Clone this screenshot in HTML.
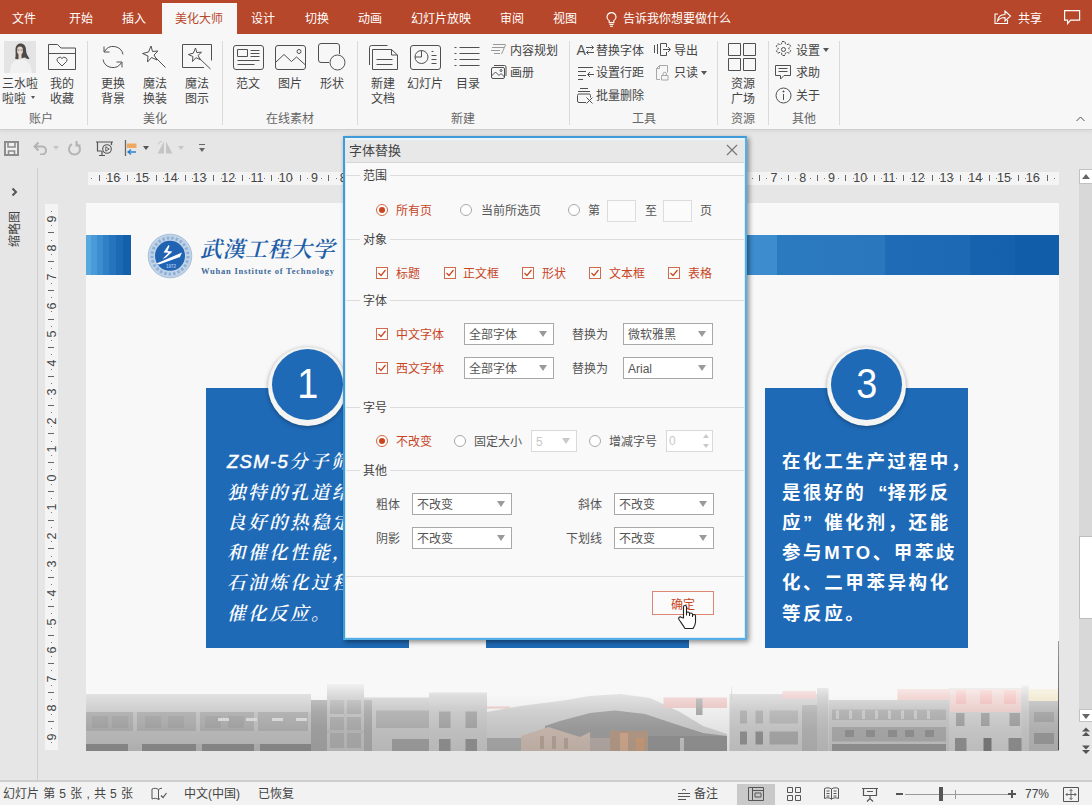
<!DOCTYPE html>
<html lang="zh-CN">
<head>
<meta charset="utf-8">
<title>字体替换</title>
<style>
*{box-sizing:border-box;margin:0;padding:0}
html,body{width:1092px;height:805px;overflow:hidden;background:#e6e6e6}
body{font-family:"Liberation Sans","Noto Sans CJK SC",sans-serif;font-size:12px;color:#444;position:relative}
.abs{position:absolute}
#tabbar{position:absolute;left:0;top:0;width:1092px;height:34px;background:#b7472a}
#tabbar .t{position:absolute;top:11px;font-size:12px;line-height:16px;color:#fff;white-space:nowrap}
#acttab{position:absolute;left:162px;top:3px;width:75px;height:32px;background:#f7f7f7}
#ribbon{position:absolute;left:0;top:34px;width:1092px;height:96px;background:#f7f7f7;border-bottom:1px solid #cfcfcf;box-shadow:0 2px 3px rgba(0,0,0,.05)}
.sep{position:absolute;top:41px;width:1px;height:84px;background:#dadada}
.lbl{position:absolute;font-size:12px;line-height:15px;color:#444;text-align:center;white-space:nowrap}
.glbl{position:absolute;top:112px;font-size:12px;line-height:15px;color:#666;text-align:center;white-space:nowrap}
.ico{position:absolute;overflow:visible}
.ico *{fill:none;stroke:#505050;stroke-width:1}
#status{position:absolute;left:0;top:780px;width:1092px;height:25px;background:#f2f2f2;border-top:2px solid #cecece}
#status .s{position:absolute;top:4px;font-size:12px;line-height:16px;color:#444;white-space:nowrap}
#leftpane{position:absolute;left:0;top:168px;width:38px;height:612px;border-right:1px solid #cfcfcf}
#slide{position:absolute;left:86px;top:203px;width:973px;height:548px;background:#f8f8f8;overflow:hidden}
/* dialog */
#dlg{position:absolute;left:343px;top:136px;width:404px;height:504px;background:#f9f9f9;border:2px solid #3f9cd8;border-right-color:#56aee6;border-bottom-color:#56aee6;box-shadow:2px 2px 5px rgba(0,0,0,.45)}
#dlg:before{content:"";position:absolute;left:0;top:0;right:0;bottom:0;border:1px solid #d6ecf8;border-top:2px solid #eaf4fa;z-index:3;pointer-events:none}
#dlg .ttl{position:absolute;left:0;top:0;width:400px;height:25px;background:#e8e8e8;border-bottom:1px solid #d6d6d6}
#dlg .d{margin-top:1px;position:absolute;font-size:12px;line-height:16px;white-space:nowrap;color:#555}
#dlg .o{color:#c8451f}
#dlg .hl{position:absolute;left:0;width:400px;height:1px;background:#dcdcdc}
#dlg .sec{margin-top:1px;position:absolute;left:15px;font-size:12px;line-height:16px;background:#f8f8f8;padding:0 3px;color:#444}
.rad{position:absolute;width:12px;height:12px;border-radius:50%;border:1px solid #a9a9a9;background:#fff}
.rad.on{border-color:#d2693f}
.rad.on:after{content:"";position:absolute;left:2px;top:2px;width:6px;height:6px;border-radius:50%;background:#c8451f}
.chk{position:absolute;width:12px;height:12px;border:1px solid #d06a4c;background:#fff}
.chk svg{position:absolute;left:0;top:0}
.sel{padding-top:1px;position:absolute;height:22px;border:1px solid #a8a8a8;background:#fff;font-size:12px;line-height:20px;color:#555;padding-left:4px;white-space:nowrap}
.sel:after{content:"";position:absolute;right:6px;top:7px;border-left:4px solid transparent;border-right:4px solid transparent;border-top:6.500px solid #9a9a9a}
.sel.dis{border-color:#d9d9d9;color:#c8c8c8}
.sel.dis:after{border-top-color:#c9c9c9}
.rn{position:absolute;top:170px;width:20px;text-align:center;font-size:12.500px;line-height:16px;color:#444}
.rt{position:absolute;top:175px;width:1px;height:6px;background:#666}
.rd{position:absolute;top:178px;width:1px;height:1px;background:#777}
.vn{position:absolute;left:43.500px;margin-top:1px;width:16px;height:12px;text-align:center;font-size:12.500px;line-height:12px;color:#444;transform:rotate(-90deg)}
.vt{position:absolute;left:48px;width:6px;height:1px;background:#666}
.vd{position:absolute;left:51px;width:1px;height:1px;background:#777}
.q{display:inline-block;width:21.100px;letter-spacing:0}
.dg{display:inline-block;transform:scaleX(.9)}
</style>
</head>
<body>
<div id="tabbar">
<div id="acttab"></div>
<span class="t" style="left:12px">文件</span>
<span class="t" style="left:69px">开始</span>
<span class="t" style="left:122px">插入</span>
<span class="t" style="left:175px;color:#b7472a">美化大师</span>
<span class="t" style="left:251px">设计</span>
<span class="t" style="left:305px">切换</span>
<span class="t" style="left:358px">动画</span>
<span class="t" style="left:411px">幻灯片放映</span>
<span class="t" style="left:500px">审阅</span>
<span class="t" style="left:553px">视图</span>
<svg class="abs" style="left:605px;top:12px" width="13" height="15" viewBox="0 0 13 15"><path d="M6.500 0.600a4.300 4.300 0 0 0-2.300 8v2h4.600v-2a4.300 4.300 0 0 0-2.300-8zM4.500 12.500h4M5 14.300h3" fill="none" stroke="#fff" stroke-width="1.100"/></svg>
<span class="t" style="left:623px">告诉我你想要做什么</span>
<svg class="abs" style="left:994px;top:10px" width="18" height="15" viewBox="0 0 18 15"><path d="M4 4h-3v9.500h12.500v-3.500M3.500 11c.500-4 3-6.500 7.500-6.500v-3.500l5.500 5-5.500 5v-3.500c-3.500 0-5.500 1-7.500 3.500z" fill="none" stroke="#fff" stroke-width="1.100"/></svg>
<span class="t" style="left:1018px">共享</span>
<svg class="abs" style="left:1064px;top:10px" width="17" height="15" viewBox="0 0 17 15"><path d="M0.600 0.600h15v9.500h-9l-3 3.500v-3.500h-3z" fill="none" stroke="#fff" stroke-width="1.200"/></svg>
</div>
<div id="ribbon"></div>
<!-- group: account -->
<svg class="abs" style="left:4px;top:41px" width="32" height="32" viewBox="0 0 32 32"><rect width="32" height="32" fill="#e4e4e4"/><path d="M6 32c0-8 3-12 8-13.500h5c5 1.500 8.500 5.500 9 13.500z" fill="#f1f1f1"/><path d="M11.500 9c0-4 2-6.500 5-6.500 3.500 0 5.500 2.500 5.500 6.500 0 3 1.500 6 3.500 8.500-1.500 1-3 .500-4.500-1l-5 1c-1.500 1-3.500 1-5 0 1-2 .500-5 .500-8.500z" fill="#4c4a49"/><ellipse cx="16" cy="9.500" rx="3" ry="4" fill="#e6d6cc"/><path d="M14.500 13h3v4.500l-1.500 1.500-1.500-1.500z" fill="#e6d6cc"/><path d="M13.200 9h2.200M16.600 9h2.200" stroke="#555" stroke-width=".7" fill="none"/></svg>
<div class="lbl" style="left:2px;top:77px;width:36px">三水啦</div>
<div class="lbl" style="left:2px;top:91.500px;width:24px">啦啦</div>
<div class="abs" style="left:31px;top:96px;border-left:2.500px solid transparent;border-right:2.500px solid transparent;border-top:3.500px solid #555"></div>
<svg class="ico" style="left:48px;top:43px" width="29" height="28" viewBox="0 0 29 28"><path d="M0.500 26.500v-25h9l3.500 3.500h14.500v21.500zM0.500 10.500h27"/><path d="M14 23l-4.500-4.500a2.700 2.700 0 0 1 4.500-3 2.700 2.700 0 0 1 4.500 3z"/></svg>
<div class="lbl" style="left:50px;top:77px;width:24px">我的</div>
<div class="lbl" style="left:50px;top:91.500px;width:24px">收藏</div>
<div class="glbl" style="left:29px;width:24px">账户</div>
<div class="sep" style="left:87px"></div>
<!-- group: beautify -->
<svg class="ico" style="left:100px;top:45px;transform:scaleX(-1)" width="26" height="24" viewBox="0 0 26 24"><path d="M3 9.500a10 10 0 0 1 18.500-3M23 14.500a10 10 0 0 1-18.500 3"/><path d="M22 1.500v5.500h-5.500M4 22.500v-5.500h5.500"/></svg>
<div class="lbl" style="left:101px;top:77px;width:24px">更换</div>
<div class="lbl" style="left:101px;top:91.500px;width:24px">背景</div>
<svg class="ico" style="left:142px;top:45px" width="25" height="24" viewBox="0 0 25 24"><path d="M9 1l1.500 5.500 5.500-.5-4 4 3 5-5.500-2.500-4 4.500.500-6-5.500-2.500 6-1.500z"/><path d="M13 12l10.500 10.500" stroke-width="1.600"/></svg>
<div class="lbl" style="left:143px;top:77px;width:24px">魔法</div>
<div class="lbl" style="left:143px;top:91.500px;width:24px">换装</div>
<svg class="ico" style="left:182px;top:44px" width="31" height="26" viewBox="0 0 31 26"><path d="M22 23.500h-21.500v-23h29v16"/><path d="M13.500 4l1.300 4.500 4.700-.300-3.500 3.300 2.500 4.200-4.600-2-3.400 3.800.400-5-4.600-2 5-1.300z"/><path d="M17 14l11.500 11" stroke-width="1.600"/></svg>
<div class="lbl" style="left:185px;top:77px;width:24px">魔法</div>
<div class="lbl" style="left:185px;top:91.500px;width:24px">图示</div>
<div class="glbl" style="left:143px;width:24px">美化</div>
<div class="sep" style="left:222px"></div>
<!-- group: online material -->
<svg class="ico" style="left:233px;top:45px" width="31" height="25" viewBox="0 0 31 25"><rect x="0.500" y="0.500" width="30" height="24" rx="2.500"/><path d="M4.500 4.500h10v7h-10zM17.500 5.500h9M17.500 8.500h9M17.500 11.500h9M4.500 15.500h22M4.500 19.500h17"/></svg>
<div class="lbl" style="left:236px;top:77px;width:24px">范文</div>
<svg class="ico" style="left:275px;top:45px" width="31" height="25" viewBox="0 0 31 25"><rect x="0.500" y="0.500" width="30" height="24" rx="2.500"/><path d="M0.500 17.500l8.500-8 7.500 7 5-4.500 9 8"/><circle cx="24" cy="6.500" r="2"/></svg>
<div class="lbl" style="left:278px;top:77px;width:24px">图片</div>
<svg class="ico" style="left:318px;top:43px" width="28" height="28" viewBox="0 0 28 28"><path d="M11 19.500h-8a2.500 2.500 0 0 1-2.500-2.500v-14a2.500 2.500 0 0 1 2.500-2.500h16a2.500 2.500 0 0 1 2.500 2.500v8"/><circle cx="19.500" cy="19.500" r="7.500"/></svg>
<div class="lbl" style="left:320px;top:77px;width:24px">形状</div>
<div class="glbl" style="left:266px;width:48px">在线素材</div>
<div class="sep" style="left:357px"></div>
<!-- group: new -->
<svg class="ico" style="left:368px;top:44px" width="31" height="26" viewBox="0 0 31 26"><path d="M4.500 25.500v-20h19l6 5.500v14.500zM23.500 5.500v5.500h6M8.500 15.500h16M8.500 20.500h16"/><path d="M1.500 21v-17.500a2 2 0 0 1 2-2h16"/></svg>
<div class="lbl" style="left:371px;top:77px;width:24px">新建</div>
<div class="lbl" style="left:371px;top:91.500px;width:24px">文档</div>
<svg class="ico" style="left:410px;top:45px" width="31" height="25" viewBox="0 0 31 25"><rect x="0.500" y="0.500" width="30" height="24" rx="2.500"/><circle cx="11.500" cy="12" r="6.500"/><path d="M11.500 5.500v6.500h-6.500M21.500 6.500h2M21.500 10.500h5M21.500 14.500h5M21.500 18.500h5"/></svg>
<div class="lbl" style="left:407px;top:77px;width:36px">幻灯片</div>
<svg class="ico" style="left:454px;top:46px" width="26" height="22" viewBox="0 0 26 22"><path d="M5.500 1.500h20M5.500 7.500h20M5.500 13.500h20M5.500 19.500h20"/><path d="M0.500 1.500h2M0.500 7.500h2M0.500 13.500h2M0.500 19.500h2" stroke-width="2"/></svg>
<div class="lbl" style="left:456px;top:77px;width:24px">目录</div>
<svg class="ico" style="left:491px;top:43px" width="15" height="13" viewBox="0 0 15 13"><path d="M2 1.500h12.500M1 4.500h12M0 7.500h9M3 10.500h6M14.500 2l-4 9" style="stroke:#999"/></svg>
<div class="lbl" style="left:510px;top:43.500px">内容规划</div>
<svg class="ico" style="left:491px;top:65px" width="16" height="14" viewBox="0 0 16 14"><rect x="0.500" y="2.500" width="13" height="11" rx="1.500"/><path d="M0.500 11l4-4 3.500 3.500 2-2 3.500 3.500M3 0.500h10.500a1.500 1.500 0 0 1 1.500 1.500v9"/><circle cx="10" cy="5.500" r="1"/></svg>
<div class="lbl" style="left:510px;top:66px">画册</div>
<div class="glbl" style="left:451px;width:24px">新建</div>
<div class="sep" style="left:569px"></div>
<!-- group: tools -->
<div class="lbl" style="left:576.500px;top:41.500px;font-size:14px;line-height:16px;color:#505050">A</div>
<svg class="ico" style="left:586px;top:45px" width="8" height="10" viewBox="0 0 8 10"><path d="M0 2.500h7.500M5.500 0.500l2 2-2 2M8 7.500h-7.500M2.500 5.500l-2 2 2 2"/></svg>
<div class="lbl" style="left:596px;top:43.500px">替换字体</div>
<svg class="ico" style="left:654px;top:43px" width="17" height="14" viewBox="0 0 17 14"><path d="M0.500 2v8M3.500 1v10M12.500 4v-3.500h-6v12h6v-3.500M9 6.500h7M14 4l2.500 2.500-2.500 2.500"/></svg>
<div class="lbl" style="left:674px;top:43.500px">导出</div>
<svg class="ico" style="left:578px;top:66px" width="16" height="14" viewBox="0 0 16 14"><path d="M0 1.500h15M0 5.500h8M0 9.500h8M0 13.500h5M16 8.500h-6M12 6l-2.500 2.500 2.500 2.500"/></svg>
<div class="lbl" style="left:596px;top:66px">设置行距</div>
<svg class="ico" style="left:656px;top:65px" width="13" height="16" viewBox="0 0 13 16"><path d="M4 14.500h-3.500v-11l3-3h8v7M0.500 3.500h3v-3" style="stroke:#a8a8a8"/><path d="M5.500 10.500h6.500v4.500h-6.500zM7 10.500v-1.500a1.700 1.700 0 0 1 3.400 0v1.500" style="stroke:#a8a8a8"/></svg>
<div class="lbl" style="left:674px;top:66px">只读</div>
<div class="abs" style="left:701px;top:71px;border-left:3px solid transparent;border-right:3px solid transparent;border-top:4px solid #555"></div>
<svg class="ico" style="left:577px;top:88px" width="17" height="16" viewBox="0 0 17 16"><path d="M3 0.500h8M1 3.500h12M9 14.500h-7a1.500 1.500 0 0 1-1.500-1.500v-5.500a1.500 1.500 0 0 1 1.500-1.500h10a1.500 1.500 0 0 1 1.500 1.500v2M9.500 9.500l6 6M15.500 9.500l-6 6"/></svg>
<div class="lbl" style="left:596px;top:89px">批量删除</div>
<div class="glbl" style="left:632px;width:24px">工具</div>
<div class="sep" style="left:717px"></div>
<!-- group: resources -->
<svg class="ico" style="left:728px;top:43px" width="30" height="28" viewBox="0 0 30 28"><path d="M0.500 0.500h12v12h-12zM15.500 0.500h12v12h-12zM0.500 15.500h12v12h-12zM15.500 15.500h12v12h-12z"/></svg>
<div class="lbl" style="left:731px;top:77px;width:24px">资源</div>
<div class="lbl" style="left:731px;top:91.500px;width:24px">广场</div>
<div class="glbl" style="left:731px;width:24px">资源</div>
<div class="sep" style="left:768px"></div>
<!-- group: other -->
<svg class="ico" style="left:775px;top:41px" width="17" height="17" viewBox="0 0 17 17"><circle cx="8.500" cy="8.500" r="2"/><path d="M7 0.500h3l.400 2.300 1.600.900 2.200-.900 1.500 2.600-1.800 1.500v1.200l1.800 1.500-1.500 2.600-2.200-.900-1.600.900-.400 2.300h-3l-.400-2.300-1.600-.900-2.200.900-1.500-2.600 1.800-1.500v-1.200l-1.800-1.500 1.500-2.600 2.200.900 1.600-.900z" stroke-dasharray="2.500 1"/></svg>
<div class="lbl" style="left:796px;top:43.500px">设置</div>
<div class="abs" style="left:823px;top:48px;border-left:3px solid transparent;border-right:3px solid transparent;border-top:4px solid #555"></div>
<svg class="ico" style="left:775px;top:65px" width="17" height="15" viewBox="0 0 17 15"><path d="M0.500 0.500h15v10h-6.500l-3.500 3.500v-3.500h-5zM3.500 3.500h9M3.500 6.500h9"/></svg>
<div class="lbl" style="left:796px;top:66px">求助</div>
<svg class="ico" style="left:775px;top:87px" width="17" height="17" viewBox="0 0 17 17"><circle cx="8.500" cy="8.500" r="7.500"/><path d="M8.500 7v6" stroke-width="1.500"/><circle cx="8.500" cy="4.500" r=".6" style="fill:#505050"/></svg>
<div class="lbl" style="left:796px;top:89px">关于</div>
<div class="glbl" style="left:792px;width:24px">其他</div>
<div class="sep" style="left:839px"></div>
<svg class="ico" style="left:1076px;top:116px" width="9" height="6" viewBox="0 0 9 6"><path d="M0.500 5l4-4 4 4" stroke-width="1.400"/></svg>
<svg class="abs" style="left:4px;top:141px" width="15" height="15" viewBox="0 0 15 15"><path d="M1 1h13v13h-13z" fill="#f0f0f0" stroke="#8c8c8c" stroke-width="2"/><path d="M4 1.500v4.500h7v-4.500M4.500 14v-4h6v4" fill="none" stroke="#8c8c8c" stroke-width="1.600"/></svg>
<svg class="abs" style="left:33px;top:141px" width="15" height="14" viewBox="0 0 15 14"><path d="M1.500 5.500h7.500a4 4 0 0 1 0 8h-2M5.500 1.500l-4 4 4 4" fill="none" stroke="#b4b4b4" stroke-width="2"/></svg>
<div class="abs" style="left:53px;top:146px;border-left:3px solid transparent;border-right:3px solid transparent;border-top:4px solid #c6c6c6"></div>
<svg class="abs" style="left:67px;top:141px" width="15" height="15" viewBox="0 0 15 15"><path d="M10 3.200a5.500 5.500 0 1 1-5 0M9.500 0v4.500h4" fill="none" stroke="#b4b4b4" stroke-width="2"/></svg>
<svg class="abs" style="left:96px;top:141px" width="17" height="16" viewBox="0 0 17 16"><path d="M0 1h17M1.500 1v9h4M15.500 1v3M3 14.500h6M6 10v4.500" fill="none" stroke="#555" stroke-width="1.200"/><circle cx="11" cy="8" r="4.300" fill="#e6e6e6" stroke="#555" stroke-width="1.100"/><path d="M9.800 5.800v4.400l3.400-2.200z" fill="none" stroke="#555" stroke-width=".9"/></svg>
<svg class="abs" style="left:124px;top:140px" width="13" height="16" viewBox="0 0 13 16"><path d="M1.500 0v16" stroke="#666" stroke-width="1.300"/><rect x="3" y="3.500" width="9.500" height="4.500" fill="#f0a860"/><path d="M4 12h8M7 9.500l-3 2.500 3 2.500" fill="none" stroke="#2f7fd0" stroke-width="1.300"/></svg>
<div class="abs" style="left:143px;top:146px;border-left:3px solid transparent;border-right:3px solid transparent;border-top:4px solid #555"></div>
<svg class="abs" style="left:157px;top:141px" width="16" height="13" viewBox="0 0 16 13"><path d="M7 0.500v12h-6.500zM9 0.500l6.500 12h-6.500z" fill="#c4c4c4"/><path d="M1 3.500a4 4 0 0 1 4-3" fill="none" stroke="#c4c4c4"/></svg>
<div class="abs" style="left:178px;top:146px;border-left:3px solid transparent;border-right:3px solid transparent;border-top:4px solid #c6c6c6"></div>
<div class="abs" style="left:199px;top:144px;width:6px;height:1px;background:#666"></div><div class="abs" style="left:199px;top:148px;border-left:3px solid transparent;border-right:3px solid transparent;border-top:4px solid #666"></div>
<div id="leftpane"></div>
<svg class="abs" style="left:11px;top:187px" width="7" height="10" viewBox="0 0 7 10"><path d="M1.500 1.500l3.500 3.500-3.500 3.500" fill="none" stroke="#555" stroke-width="2"/></svg>
<div class="abs" style="left:-4px;top:221px;width:38px;height:16px;line-height:16px;font-size:12px;color:#444;text-align:center;transform:rotate(-90deg);white-space:nowrap">缩略图</div>
<div class="abs" style="left:88px;top:172px;width:971px;height:13px;background:#f4f4f4"></div>
<span class="rn" style="left:103.3px">16</span>
<span class="rn" style="left:132.1px">15</span>
<span class="rn" style="left:160.8px">14</span>
<span class="rn" style="left:189.5px">13</span>
<span class="rn" style="left:218.2px">12</span>
<span class="rn" style="left:247.0px">11</span>
<span class="rn" style="left:275.7px">10</span>
<span class="rn" style="left:304.4px">9</span>
<span class="rn" style="left:333.2px">8</span>
<span class="rn" style="left:361.9px">7</span>
<span class="rn" style="left:390.6px">6</span>
<span class="rn" style="left:419.4px">5</span>
<span class="rn" style="left:448.1px">4</span>
<span class="rn" style="left:476.8px">3</span>
<span class="rn" style="left:505.5px">2</span>
<span class="rn" style="left:534.3px">1</span>
<span class="rn" style="left:563.0px">0</span>
<span class="rn" style="left:591.7px">1</span>
<span class="rn" style="left:620.5px">2</span>
<span class="rn" style="left:649.2px">3</span>
<span class="rn" style="left:677.9px">4</span>
<span class="rn" style="left:706.6px">5</span>
<span class="rn" style="left:764.1px">7</span>
<span class="rn" style="left:792.8px">8</span>
<span class="rn" style="left:821.6px">9</span>
<span class="rn" style="left:850.3px">10</span>
<span class="rn" style="left:879.0px">11</span>
<span class="rn" style="left:907.8px">12</span>
<span class="rn" style="left:936.5px">13</span>
<span class="rn" style="left:965.2px">14</span>
<span class="rn" style="left:994.0px">15</span>
<span class="rn" style="left:1022.7px">16</span>
<i class="rt" style="left:98.5px"></i>
<i class="rt" style="left:127.2px"></i>
<i class="rt" style="left:155.9px"></i>
<i class="rt" style="left:184.6px"></i>
<i class="rt" style="left:213.4px"></i>
<i class="rt" style="left:242.1px"></i>
<i class="rt" style="left:270.8px"></i>
<i class="rt" style="left:299.6px"></i>
<i class="rt" style="left:328.3px"></i>
<i class="rt" style="left:357.0px"></i>
<i class="rt" style="left:385.8px"></i>
<i class="rt" style="left:414.5px"></i>
<i class="rt" style="left:443.2px"></i>
<i class="rt" style="left:471.9px"></i>
<i class="rt" style="left:500.7px"></i>
<i class="rt" style="left:529.4px"></i>
<i class="rt" style="left:558.1px"></i>
<i class="rt" style="left:586.9px"></i>
<i class="rt" style="left:615.6px"></i>
<i class="rt" style="left:644.3px"></i>
<i class="rt" style="left:673.1px"></i>
<i class="rt" style="left:701.8px"></i>
<i class="rt" style="left:730.5px"></i>
<i class="rt" style="left:759.2px"></i>
<i class="rt" style="left:788.0px"></i>
<i class="rt" style="left:816.7px"></i>
<i class="rt" style="left:845.4px"></i>
<i class="rt" style="left:874.2px"></i>
<i class="rt" style="left:902.9px"></i>
<i class="rt" style="left:931.6px"></i>
<i class="rt" style="left:960.4px"></i>
<i class="rt" style="left:989.1px"></i>
<i class="rt" style="left:1017.8px"></i>
<i class="rt" style="left:1046.5px"></i>
<i class="rd" style="left:91.3px"></i>
<i class="rd" style="left:105.6px"></i>
<i class="rd" style="left:120.0px"></i>
<i class="rd" style="left:134.4px"></i>
<i class="rd" style="left:148.7px"></i>
<i class="rd" style="left:163.1px"></i>
<i class="rd" style="left:177.5px"></i>
<i class="rd" style="left:191.8px"></i>
<i class="rd" style="left:206.2px"></i>
<i class="rd" style="left:220.6px"></i>
<i class="rd" style="left:234.9px"></i>
<i class="rd" style="left:249.3px"></i>
<i class="rd" style="left:263.7px"></i>
<i class="rd" style="left:278.0px"></i>
<i class="rd" style="left:292.4px"></i>
<i class="rd" style="left:306.7px"></i>
<i class="rd" style="left:321.1px"></i>
<i class="rd" style="left:335.5px"></i>
<i class="rd" style="left:349.8px"></i>
<i class="rd" style="left:364.2px"></i>
<i class="rd" style="left:378.6px"></i>
<i class="rd" style="left:392.9px"></i>
<i class="rd" style="left:407.3px"></i>
<i class="rd" style="left:421.7px"></i>
<i class="rd" style="left:436.0px"></i>
<i class="rd" style="left:450.4px"></i>
<i class="rd" style="left:464.8px"></i>
<i class="rd" style="left:479.1px"></i>
<i class="rd" style="left:493.5px"></i>
<i class="rd" style="left:507.9px"></i>
<i class="rd" style="left:522.2px"></i>
<i class="rd" style="left:536.6px"></i>
<i class="rd" style="left:551.0px"></i>
<i class="rd" style="left:565.3px"></i>
<i class="rd" style="left:579.7px"></i>
<i class="rd" style="left:594.0px"></i>
<i class="rd" style="left:608.4px"></i>
<i class="rd" style="left:622.8px"></i>
<i class="rd" style="left:637.1px"></i>
<i class="rd" style="left:651.5px"></i>
<i class="rd" style="left:665.9px"></i>
<i class="rd" style="left:680.2px"></i>
<i class="rd" style="left:694.6px"></i>
<i class="rd" style="left:709.0px"></i>
<i class="rd" style="left:723.3px"></i>
<i class="rd" style="left:737.7px"></i>
<i class="rd" style="left:752.1px"></i>
<i class="rd" style="left:766.4px"></i>
<i class="rd" style="left:780.8px"></i>
<i class="rd" style="left:795.2px"></i>
<i class="rd" style="left:809.5px"></i>
<i class="rd" style="left:823.9px"></i>
<i class="rd" style="left:838.3px"></i>
<i class="rd" style="left:852.6px"></i>
<i class="rd" style="left:867.0px"></i>
<i class="rd" style="left:881.3px"></i>
<i class="rd" style="left:895.7px"></i>
<i class="rd" style="left:910.1px"></i>
<i class="rd" style="left:924.4px"></i>
<i class="rd" style="left:938.8px"></i>
<i class="rd" style="left:953.2px"></i>
<i class="rd" style="left:967.5px"></i>
<i class="rd" style="left:981.9px"></i>
<i class="rd" style="left:996.3px"></i>
<i class="rd" style="left:1010.6px"></i>
<i class="rd" style="left:1025.0px"></i>
<i class="rd" style="left:1039.4px"></i>
<i class="rd" style="left:1053.7px"></i>
<div class="abs" style="left:45px;top:204px;width:13px;height:546px;background:#f4f4f4"></div>
<span class="vn" style="top:212.4px">9</span>
<span class="vn" style="top:241.2px">8</span>
<span class="vn" style="top:269.9px">7</span>
<span class="vn" style="top:298.6px">6</span>
<span class="vn" style="top:327.4px">5</span>
<span class="vn" style="top:356.1px">4</span>
<span class="vn" style="top:384.8px">3</span>
<span class="vn" style="top:413.5px">2</span>
<span class="vn" style="top:442.3px">1</span>
<span class="vn" style="top:471.0px">0</span>
<span class="vn" style="top:499.7px">1</span>
<span class="vn" style="top:528.5px">2</span>
<span class="vn" style="top:557.2px">3</span>
<span class="vn" style="top:585.9px">4</span>
<span class="vn" style="top:614.6px">5</span>
<span class="vn" style="top:643.4px">6</span>
<span class="vn" style="top:672.1px">7</span>
<span class="vn" style="top:700.8px">8</span>
<span class="vn" style="top:729.6px">9</span>
<i class="vt" style="top:232.3px"></i>
<i class="vt" style="top:261.0px"></i>
<i class="vt" style="top:289.8px"></i>
<i class="vt" style="top:318.5px"></i>
<i class="vt" style="top:347.2px"></i>
<i class="vt" style="top:375.9px"></i>
<i class="vt" style="top:404.7px"></i>
<i class="vt" style="top:433.4px"></i>
<i class="vt" style="top:462.1px"></i>
<i class="vt" style="top:490.9px"></i>
<i class="vt" style="top:519.6px"></i>
<i class="vt" style="top:548.3px"></i>
<i class="vt" style="top:577.1px"></i>
<i class="vt" style="top:605.8px"></i>
<i class="vt" style="top:634.5px"></i>
<i class="vt" style="top:663.2px"></i>
<i class="vt" style="top:692.0px"></i>
<i class="vt" style="top:720.7px"></i>
<i class="vd" style="top:210.7px"></i>
<i class="vd" style="top:225.1px"></i>
<i class="vd" style="top:239.5px"></i>
<i class="vd" style="top:253.8px"></i>
<i class="vd" style="top:268.2px"></i>
<i class="vd" style="top:282.6px"></i>
<i class="vd" style="top:296.9px"></i>
<i class="vd" style="top:311.3px"></i>
<i class="vd" style="top:325.7px"></i>
<i class="vd" style="top:340.0px"></i>
<i class="vd" style="top:354.4px"></i>
<i class="vd" style="top:368.8px"></i>
<i class="vd" style="top:383.1px"></i>
<i class="vd" style="top:397.5px"></i>
<i class="vd" style="top:411.9px"></i>
<i class="vd" style="top:426.2px"></i>
<i class="vd" style="top:440.6px"></i>
<i class="vd" style="top:455.0px"></i>
<i class="vd" style="top:469.3px"></i>
<i class="vd" style="top:483.7px"></i>
<i class="vd" style="top:498.0px"></i>
<i class="vd" style="top:512.4px"></i>
<i class="vd" style="top:526.8px"></i>
<i class="vd" style="top:541.1px"></i>
<i class="vd" style="top:555.5px"></i>
<i class="vd" style="top:569.9px"></i>
<i class="vd" style="top:584.2px"></i>
<i class="vd" style="top:598.6px"></i>
<i class="vd" style="top:613.0px"></i>
<i class="vd" style="top:627.3px"></i>
<i class="vd" style="top:641.7px"></i>
<i class="vd" style="top:656.1px"></i>
<i class="vd" style="top:670.4px"></i>
<i class="vd" style="top:684.8px"></i>
<i class="vd" style="top:699.2px"></i>
<i class="vd" style="top:713.5px"></i>
<i class="vd" style="top:727.9px"></i>
<i class="vd" style="top:742.3px"></i>
<div id="slide">
<div class="abs" style="left:0;top:32px;width:45px;height:40px;background:linear-gradient(90deg,#58a8e0 0,#58a8e0 12%,#4a9ad8 12%,#4a9ad8 25%,#3c8ccf 25%,#3c8ccf 38%,#3080c6 38%,#3080c6 52%,#2674bd 52%,#2674bd 66%,#1c69b4 66%,#1c69b4 82%,#145fab 82%)"></div>
<div class="abs" style="left:259px;top:32px;width:714px;height:40px;background:linear-gradient(90deg,#4a98d6 0,#3d8ccd 60.5%,#2b79bf 60.5%,#2a77be 75.6%,#1f6bb6 75.6%,#1d69b4 87.5%,#1662af 87.5%,#1561ae 93.8%,#115daa 93.8%)"></div>
<svg class="abs" style="left:61px;top:30px" width="46" height="46" viewBox="0 0 46 46"><circle cx="23" cy="23" r="21.800" fill="#c0d3e7" stroke="#a9c0da" stroke-width="1"/><circle cx="23" cy="23" r="18" fill="none" stroke="#8fb0d6" stroke-width="3" stroke-dasharray="2.500 2"/><circle cx="23" cy="22.800" r="15" fill="#1f63b2"/><path d="M21.500 12l-5 7.500 5 .300-6 6.200 3.500-1.500 6.500-6-5-.500 2-5z" fill="#fff"/><path d="M9.500 30.500l25.500-11-2 4.500-21 7.500z" fill="#fff"/><text x="19" y="34.500" font-size="4.500" fill="#9fc0e6" font-family="Liberation Sans,sans-serif" font-weight="bold">1972</text></svg>
<div class="abs" style="left:114px;top:32px;width:140px;height:30px;font-family:'Liberation Serif','Noto Serif CJK SC',serif;font-weight:600;font-style:italic;font-size:22px;line-height:30px;color:#1d5ea8;white-space:nowrap;letter-spacing:.5px">武漢工程大学</div>
<div class="abs" style="left:115px;top:62px;font-family:'Liberation Serif',serif;font-weight:bold;font-size:8.500px;line-height:12px;color:#3d6a9a;white-space:nowrap;letter-spacing:.75px">Wuhan Institute of Technology</div>
<div class="abs" style="left:120px;top:185px;width:203px;height:260px;background:#1e6ab7"></div>
<div class="abs" style="left:182.0px;top:144.0px;width:79px;height:79px;border-radius:50%;background:#f4f4f2;box-shadow:0 1px 4px rgba(0,0,0,.35)"></div>
<div class="abs" style="left:186.0px;top:146.0px;width:71px;height:71px;border-radius:50%;background:#1e6ab7;color:#fff;font-size:42px;line-height:70px;text-align:center;font-family:'Liberation Sans',sans-serif"><span class="dg">1</span></div>
<div class="abs" style="left:141px;top:244.400px;width:400px;color:#fff;font-size:18.500px;line-height:30.250px;white-space:nowrap;font-family:'Liberation Serif','Noto Serif CJK SC',serif;font-weight:600;font-style:italic;letter-spacing:2.500px">
<span style="letter-spacing:1.300px;font-family:'Liberation Sans',sans-serif;font-weight:400;-webkit-text-stroke:.5px #fff">ZSM-5</span>分子筛由于其<br>独特的孔道结构、<br>良好的热稳定性<br>和催化性能，广泛应用于<br>石油炼化过程中的<br>催化反应。</div>
<div class="abs" style="left:400px;top:185px;width:203px;height:260px;background:#1e6ab7"></div>
<div class="abs" style="left:462.0px;top:144.0px;width:79px;height:79px;border-radius:50%;background:#f4f4f2;box-shadow:0 1px 4px rgba(0,0,0,.35)"></div>
<div class="abs" style="left:466.0px;top:146.0px;width:71px;height:71px;border-radius:50%;background:#1e6ab7;color:#fff;font-size:42px;line-height:70px;text-align:center;font-family:'Liberation Sans',sans-serif"><span class="dg">2</span></div>
<div class="abs" style="left:417px;top:244.400px;width:400px;color:#fff;font-size:18.500px;line-height:30.250px;white-space:nowrap;font-weight:700;letter-spacing:2.600px">ZSM-5分子筛</div>
<div class="abs" style="left:679px;top:185px;width:203px;height:260px;background:#1e6ab7"></div>
<div class="abs" style="left:741.0px;top:144.0px;width:79px;height:79px;border-radius:50%;background:#f4f4f2;box-shadow:0 1px 4px rgba(0,0,0,.35)"></div>
<div class="abs" style="left:745.0px;top:146.0px;width:71px;height:71px;border-radius:50%;background:#1e6ab7;color:#fff;font-size:42px;line-height:70px;text-align:center;font-family:'Liberation Sans',sans-serif"><span class="dg">3</span></div>
<div class="abs" style="left:696px;top:244.400px;width:400px;color:#fff;font-size:18.500px;line-height:30.250px;white-space:nowrap;font-weight:700;letter-spacing:2.600px">在化工生产过程中，<br>是很好的<span class="q" style="text-align:right">“</span>择形反<br>应<span class="q" style="text-align:left">”</span>催化剂，还能<br>参与MTO、甲苯歧<br>化、二甲苯异构化<br>等反应。</div>
<svg class="abs" style="left:0;top:477px" width="973" height="71" viewBox="0 0 973 71">
<defs><linearGradient id="fade" x1="0" y1="0" x2="0" y2="1"><stop offset="0" stop-color="#f8f8f8" stop-opacity="1"/><stop offset=".07" stop-color="#f8f8f8" stop-opacity=".82"/><stop offset=".22" stop-color="#f8f8f8" stop-opacity=".42"/><stop offset=".45" stop-color="#f8f8f8" stop-opacity=".12"/><stop offset=".7" stop-color="#f8f8f8" stop-opacity="0"/></linearGradient><linearGradient id="dark" x1="0" y1="0" x2="0" y2="1"><stop offset="0" stop-color="#808080" stop-opacity="0"/><stop offset="1" stop-color="#808080" stop-opacity=".28"/></linearGradient></defs>
<rect x="0.0" y="14.0" width="225.0" height="57.0" fill="#cfcfcf"/>
<rect x="0.0" y="32.0" width="225.0" height="19.0" fill="#b0b0b0"/>
<rect x="47.0" y="32.0" width="4.0" height="39.0" fill="#c6c6c6"/>
<rect x="110.0" y="32.0" width="4.0" height="39.0" fill="#c6c6c6"/>
<rect x="168.0" y="32.0" width="4.0" height="39.0" fill="#c6c6c6"/>
<rect x="222.0" y="32.0" width="4.0" height="39.0" fill="#c6c6c6"/>
<rect x="6.0" y="36.0" width="16.0" height="12.0" fill="#a6a6a6"/>
<rect x="26.0" y="36.0" width="16.0" height="12.0" fill="#a6a6a6"/>
<rect x="59.0" y="36.0" width="16.0" height="12.0" fill="#a6a6a6"/>
<rect x="82.0" y="36.0" width="16.0" height="12.0" fill="#a6a6a6"/>
<rect x="119.0" y="36.0" width="16.0" height="12.0" fill="#a6a6a6"/>
<rect x="142.0" y="36.0" width="16.0" height="12.0" fill="#a6a6a6"/>
<rect x="132.0" y="38.0" width="11.0" height="3.0" fill="#e2e2e2"/>
<rect x="160.0" y="38.0" width="11.0" height="3.0" fill="#e2e2e2"/>
<rect x="186.0" y="38.0" width="11.0" height="3.0" fill="#e2e2e2"/>
<rect x="210.0" y="38.0" width="11.0" height="3.0" fill="#e2e2e2"/>
<rect x="0.0" y="51.0" width="225.0" height="13.0" fill="#c2c2c2"/>
<rect x="0.0" y="64.0" width="225.0" height="7.0" fill="#858585"/>
<rect x="42.0" y="64.0" width="14.0" height="7.0" fill="#c0c0c0"/>
<rect x="110.0" y="64.0" width="6.0" height="7.0" fill="#b8b8b8"/>
<rect x="168.0" y="64.0" width="6.0" height="7.0" fill="#b8b8b8"/>
<rect x="225.0" y="20.0" width="16.0" height="51.0" fill="#a2a2a2"/>
<rect x="241.0" y="4.0" width="37.0" height="67.0" fill="#c4c4c4"/>
<rect x="244.0" y="20.0" width="31.0" height="48.0" fill="#adadad"/>
<rect x="241.0" y="34.0" width="37.0" height="3.0" fill="#c4c4c4"/>
<rect x="241.0" y="50.0" width="37.0" height="3.0" fill="#bcbcbc"/>
<rect x="258.0" y="20.0" width="3.0" height="48.0" fill="#c0c0c0"/>
<rect x="278.0" y="17.5" width="65.0" height="53.5" fill="#cacaca"/>
<rect x="343.0" y="12.5" width="58.0" height="58.5" fill="#cccccc"/>
<rect x="290.0" y="30.5" width="53.0" height="17.5" fill="#b2b2b2"/>
<rect x="353.0" y="31.5" width="11.5" height="16.5" fill="#a6a6a6"/>
<rect x="379.5" y="31.5" width="11.5" height="16.5" fill="#a6a6a6"/>
<rect x="306.0" y="59.0" width="37.0" height="12.0" fill="#9c9c9c"/>
<rect x="353.0" y="59.0" width="11.5" height="12.0" fill="#8c8c8c"/>
<rect x="379.5" y="59.0" width="11.5" height="12.0" fill="#8c8c8c"/>
<rect x="278.0" y="20.0" width="8.0" height="51.0" fill="#a8a8a8"/>
<path d="M401.0 32.0 L434.0 26.0 L474.0 21.0 L504.0 16.0 L534.0 14.0 L564.0 18.0 L594.0 32.0 L617.0 46.0 L641.0 54.0 L641.0 71.0 L401.0 71.0z" fill="#d2d2d2"/>
<path d="M459.0 71.0 L459.0 46.0 L474.0 41.0 L504.0 33.0 L529.0 30.5 L559.0 34.0 L589.0 44.0 L617.0 53.0 L641.0 56.0 L641.0 71.0z" fill="#9c9c9c"/>
<rect x="401.0" y="26.5" width="23.0" height="2.0" fill="#f0c8c4"/>
<rect x="401.0" y="58.0" width="34.0" height="13.0" fill="#a9a9a9"/>
<path d="M435.0 71.0 L435.0 56.0 L462.5 47.0 L494.0 57.0 L504.0 52.0 L504.0 71.0z" fill="#d0bcb0"/>
<rect x="454.0" y="56.0" width="4.0" height="13.0" fill="#b8a090"/>
<rect x="466.0" y="56.0" width="4.0" height="13.0" fill="#b8a090"/>
<rect x="478.0" y="58.0" width="4.0" height="11.0" fill="#b8a090"/>
<rect x="504.0" y="58.0" width="20.0" height="13.0" fill="#b8aaa4"/>
<rect x="524.0" y="51.0" width="38.0" height="20.0" fill="#b89880"/>
<rect x="534.0" y="53.0" width="8.0" height="18.0" fill="#d8a888"/>
<rect x="550.0" y="58.0" width="8.0" height="13.0" fill="#d09870"/>
<rect x="562.0" y="56.0" width="79.0" height="15.0" fill="#8e8e8e"/>
<rect x="594.0" y="58.0" width="4.0" height="13.0" fill="#c8c8c8"/>
<rect x="577.5" y="17.5" width="63.5" height="10.5" fill="#f0c6c2"/>
<rect x="610.0" y="18.5" width="6.5" height="16.5" fill="#a4a4a4"/>
<rect x="643.5" y="14.0" width="87.5" height="57.0" fill="#cecece"/>
<rect x="645.0" y="7.0" width="1.0" height="13.0" fill="#c0c0c0"/>
<rect x="696.5" y="11.0" width="33.5" height="7.5" fill="#f0c4c0"/>
<rect x="654.0" y="30.5" width="7.0" height="13.0" fill="#b0b0b0"/>
<rect x="669.5" y="30.5" width="7.5" height="13.0" fill="#b0b0b0"/>
<rect x="683.5" y="30.5" width="28.5" height="13.0" fill="#b8b8b8"/>
<rect x="654.0" y="51.5" width="7.0" height="13.0" fill="#8c8c8c"/>
<rect x="669.5" y="51.5" width="7.5" height="13.0" fill="#8c8c8c"/>
<rect x="683.5" y="51.5" width="28.5" height="13.0" fill="#a8a8a8"/>
<rect x="716.0" y="25.0" width="15.0" height="46.0" fill="#b4b4b4"/>
<rect x="731.0" y="8.0" width="11.5" height="63.0" fill="#c2c2c2"/>
<rect x="742.5" y="20.0" width="120.5" height="51.0" fill="#c8c8c8"/>
<rect x="811.5" y="9.0" width="51.5" height="11.0" fill="#f2c6c2"/>
<rect x="746.0" y="29.5" width="114.0" height="10.5" fill="#b0b0b0"/>
<rect x="750.0" y="30.5" width="3.0" height="8.5" fill="#cdcdcd"/>
<rect x="763.0" y="30.5" width="3.0" height="8.5" fill="#cdcdcd"/>
<rect x="776.0" y="30.5" width="3.0" height="8.5" fill="#cdcdcd"/>
<rect x="789.0" y="30.5" width="3.0" height="8.5" fill="#cdcdcd"/>
<rect x="802.0" y="30.5" width="3.0" height="8.5" fill="#cdcdcd"/>
<rect x="815.0" y="30.5" width="3.0" height="8.5" fill="#cdcdcd"/>
<rect x="828.0" y="30.5" width="3.0" height="8.5" fill="#cdcdcd"/>
<rect x="841.0" y="30.5" width="3.0" height="8.5" fill="#cdcdcd"/>
<rect x="746.0" y="47.0" width="114.0" height="14.5" fill="#aaaaaa"/>
<rect x="759.0" y="50.0" width="9.0" height="7.0" fill="#8e8e8e"/>
<rect x="780.0" y="50.0" width="9.0" height="7.0" fill="#8e8e8e"/>
<rect x="802.0" y="50.0" width="9.0" height="7.0" fill="#8e8e8e"/>
<rect x="819.0" y="50.0" width="9.0" height="7.0" fill="#8e8e8e"/>
<rect x="839.0" y="50.0" width="9.0" height="7.0" fill="#8e8e8e"/>
<rect x="746.0" y="64.0" width="114.0" height="7.0" fill="#8f8f8f"/>
<rect x="863.0" y="8.0" width="77.0" height="63.0" fill="#d2d2d2"/>
<rect x="864.0" y="9.0" width="71.0" height="23.0" fill="#f2d0cc"/>
<rect x="870.0" y="10.0" width="10.0" height="14.0" fill="#f4b8b4"/>
<rect x="894.0" y="10.0" width="12.0" height="14.0" fill="#f4b8b4"/>
<rect x="918.0" y="10.0" width="12.0" height="14.0" fill="#f4b8b4"/>
<rect x="870.0" y="33.0" width="8.5" height="13.0" fill="#a2a2a2"/>
<rect x="895.0" y="33.0" width="8.5" height="13.0" fill="#a2a2a2"/>
<rect x="923.5" y="33.0" width="10.5" height="13.0" fill="#a2a2a2"/>
<rect x="869.0" y="58.0" width="11.5" height="13.0" fill="#8a8a8a"/>
<rect x="897.5" y="58.0" width="8.0" height="13.0" fill="#707070"/>
<rect x="922.5" y="58.0" width="14.0" height="13.0" fill="#8a8a8a"/>
<rect x="935.5" y="5.5" width="7.0" height="65.5" fill="#cccccc"/>
<rect x="942.5" y="9.0" width="30.5" height="62.0" fill="#b8b8b8"/>
<rect x="942.5" y="9.0" width="30.5" height="12.0" fill="#f4e8c4"/>
<rect x="948.0" y="32.0" width="20.0" height="10.0" fill="#a2a2a2"/>
<rect x="948.0" y="53.0" width="20.0" height="11.0" fill="#969696"/>
<rect x="0" y="0" width="973" height="71" fill="url(#fade)"/><rect x="0" y="14" width="973" height="57" fill="url(#dark)"/>
</svg>
<div class="abs" style="left:972px;top:438px;width:1px;height:109px;background:linear-gradient(#9a9a9a,#444)"></div>
</div>
<div class="abs" style="left:1079px;top:184px;width:13px;height:525px;background:#d8d8d8"></div>
<div class="abs" style="left:1079px;top:169px;width:14px;height:15px;background:#fff;border:1px solid #c2c2c2"></div><div class="abs" style="left:1082px;top:174px;border-left:4px solid transparent;border-right:4px solid transparent;border-bottom:5px solid #666"></div>
<div class="abs" style="left:1079px;top:536px;width:14px;height:83px;background:#fff;border:1px solid #bdbdbd"></div>
<div class="abs" style="left:1079px;top:709px;width:14px;height:13px;background:#fff;border:1px solid #c2c2c2"></div><div class="abs" style="left:1082px;top:714px;border-left:4px solid transparent;border-right:4px solid transparent;border-top:5px solid #666"></div>
<svg class="abs" style="left:1081px;top:726px" width="10" height="30" viewBox="0 0 10 30"><path d="M1 5.500l4-4 4 4zM1 10l4-4 4 4z" fill="#555"/><path d="M1 19.500l4 4 4-4zM1 24l4 4 4-4z" fill="#555"/></svg>
<div id="dlg">
<div class="ttl"></div><span class="d" style="left:4px;top:3.500px;font-size:13px;color:#444">字体替换</span>
<svg class="abs" style="left:381px;top:6px" width="12" height="12" viewBox="0 0 12 12"><path d="M1 1l10 10M11 1l-10 10" stroke="#777" stroke-width="1.200" fill="none"/></svg>
<div class="hl" style="top:37px"></div><span class="sec" style="top:29px">范围</span>
<i class="rad on" style="left:31px;top:66px"></i><span class="d o" style="left:51px;top:64px">所有页</span>
<i class="rad" style="left:115px;top:66px"></i><span class="d" style="left:136px;top:64px">当前所选页</span>
<i class="rad" style="left:223px;top:66px"></i><span class="d" style="left:243px;top:64px">第</span>
<div class="abs" style="left:262px;top:62px;width:29px;height:22px;border:1px solid #dcdcdc;background:#fbfbfb"></div>
<span class="d" style="left:300px;top:64px">至</span>
<div class="abs" style="left:318px;top:62px;width:29px;height:22px;border:1px solid #dcdcdc;background:#fbfbfb"></div>
<span class="d" style="left:355px;top:64px">页</span>
<div class="hl" style="top:101px"></div><span class="sec" style="top:93px">对象</span>
<i class="chk" style="left:31px;top:129px"><svg width="10" height="10" viewBox="0 0 10 10"><path d="M1.500 5l2.500 2.500 4.500-5.500" fill="none" stroke="#c8451f" stroke-width="1.200"/></svg></i><span class="d o" style="left:51px;top:127px">标题</span>
<i class="chk" style="left:99px;top:129px"><svg width="10" height="10" viewBox="0 0 10 10"><path d="M1.500 5l2.500 2.500 4.500-5.500" fill="none" stroke="#c8451f" stroke-width="1.200"/></svg></i><span class="d o" style="left:118px;top:127px">正文框</span>
<i class="chk" style="left:177px;top:129px"><svg width="10" height="10" viewBox="0 0 10 10"><path d="M1.500 5l2.500 2.500 4.500-5.500" fill="none" stroke="#c8451f" stroke-width="1.200"/></svg></i><span class="d o" style="left:197px;top:127px">形状</span>
<i class="chk" style="left:244px;top:129px"><svg width="10" height="10" viewBox="0 0 10 10"><path d="M1.500 5l2.500 2.500 4.500-5.500" fill="none" stroke="#c8451f" stroke-width="1.200"/></svg></i><span class="d o" style="left:264px;top:127px">文本框</span>
<i class="chk" style="left:323px;top:129px"><svg width="10" height="10" viewBox="0 0 10 10"><path d="M1.500 5l2.500 2.500 4.500-5.500" fill="none" stroke="#c8451f" stroke-width="1.200"/></svg></i><span class="d o" style="left:343px;top:127px">表格</span>
<div class="hl" style="top:162px"></div><span class="sec" style="top:154px">字体</span>
<i class="chk" style="left:31px;top:190px"><svg width="10" height="10" viewBox="0 0 10 10"><path d="M1.500 5l2.500 2.500 4.500-5.500" fill="none" stroke="#c8451f" stroke-width="1.200"/></svg></i><span class="d o" style="left:51px;top:188px">中文字体</span><div class="sel" style="left:119px;top:185px;width:90px;height:22px;line-height:20px">全部字体</div><span class="d" style="left:227px;top:188px">替换为</span><div class="sel" style="left:278px;top:185px;width:90px;height:22px;line-height:20px">微软雅黑</div>
<i class="chk" style="left:31px;top:224px"><svg width="10" height="10" viewBox="0 0 10 10"><path d="M1.500 5l2.500 2.500 4.500-5.500" fill="none" stroke="#c8451f" stroke-width="1.200"/></svg></i><span class="d o" style="left:51px;top:222px">西文字体</span><div class="sel" style="left:119px;top:219px;width:90px;height:22px;line-height:20px">全部字体</div><span class="d" style="left:227px;top:222px">替换为</span><div class="sel" style="left:278px;top:219px;width:90px;height:22px;line-height:20px">Arial</div>
<div class="hl" style="top:269px"></div><span class="sec" style="top:261px">字号</span>
<i class="rad on" style="left:31px;top:297px"></i><span class="d o" style="left:51px;top:295px">不改变</span>
<i class="rad" style="left:109px;top:297px"></i><span class="d" style="left:129px;top:295px">固定大小</span><div class="sel dis" style="left:186px;top:292px;width:46px;height:22px;line-height:20px">5</div>
<i class="rad" style="left:244px;top:297px"></i><span class="d" style="left:264px;top:295px">增减字号</span>
<div class="abs" style="left:321px;top:292px;width:47px;height:22px;border:1px solid #d9d9d9;background:#fff;color:#c8c8c8;font-size:12px;line-height:20px;padding-left:2px">0</div>
<div class="abs" style="left:358px;top:296px;border-left:3px solid transparent;border-right:3px solid transparent;border-bottom:4px solid #c9c9c9"></div>
<div class="abs" style="left:358px;top:306px;border-left:3px solid transparent;border-right:3px solid transparent;border-top:4px solid #c9c9c9"></div>
<div class="hl" style="top:332px"></div><span class="sec" style="top:324px">其他</span>
<span class="d" style="left:31px;top:358px">粗体</span><div class="sel" style="left:67px;top:355px;width:100px;height:22px;line-height:20px">不改变</div><span class="d" style="left:233px;top:358px">斜体</span><div class="sel" style="left:269px;top:355px;width:100px;height:22px;line-height:20px">不改变</div>
<span class="d" style="left:31px;top:392px">阴影</span><div class="sel" style="left:67px;top:389px;width:100px;height:22px;line-height:20px">不改变</div><span class="d" style="left:221px;top:392px">下划线</span><div class="sel" style="left:269px;top:389px;width:100px;height:22px;line-height:20px">不改变</div>
<div class="hl" style="top:438px"></div>
<div class="abs" style="left:307px;top:453px;width:62px;height:24px;border:1px solid #dc8775;background:#fbfbfb;color:#c8451f;font-size:12px;line-height:22px;padding-top:2px;text-align:center">确定</div>
</div>
<svg class="abs" style="left:677px;top:604px" width="20" height="26" viewBox="0 0 20 26"><path d="M6.500 14v-11a1.500 1.500 0 0 1 3 0v8-1.500a1.500 1.500 0 0 1 3 0v2-1a1.500 1.500 0 0 1 3 0v2-.5a1.500 1.500 0 0 1 3 0v6c0 3-1.500 5-2.500 6.500h-8c-1.500-2.500-4-6-6-9a1.600 1.600 0 0 1 2.500-2z" fill="#fff" stroke="#222" stroke-width="1.100" stroke-linejoin="round"/></svg>
<div id="status">
<span class="s" style="left:3px;word-spacing:.85px">幻灯片 第 5 张 , 共 5 张</span>
<svg class="abs" style="left:151px;top:5px" width="16" height="15" viewBox="0 0 16 15"><path d="M7.500 2.500c-2-1.500-4.500-1.500-6.500-.500v10c2-1 4.500-1 6.500.500zM7.500 2.500c1-.800 2-1.200 3.500-1.300M7.500 12.500c.500-.400 1-.700 1.500-.900" fill="none" stroke="#555" stroke-width="1"/><path d="M10 8.500l2 2 3.500-4.500" fill="none" stroke="#555" stroke-width="1.200"/></svg>
<span class="s" style="left:184px">中文(中国)</span>
<span class="s" style="left:258px">已恢复</span>
<svg class="abs" style="left:678px;top:7px" width="12" height="12" viewBox="0 0 12 12"><path d="M4 1.500l2-1.500 2 1.500M0 4.500h12M0 7.500h12M0 10.500h8" fill="none" stroke="#555" stroke-width="1"/></svg>
<span class="s" style="left:694px">备注</span>
<div class="abs" style="left:737px;top:2px;width:38px;height:22px;background:#c9c9c9"></div>
<svg class="abs" style="left:748px;top:5px" width="16" height="14" viewBox="0 0 16 14"><path d="M0.500 0.500h15v13h-15zM4.500 0.500v13M4.500 3.500h11M7 6h6v4h-6z" fill="none" stroke="#555" stroke-width="1"/></svg>
<svg class="abs" style="left:787px;top:5px" width="15" height="14" viewBox="0 0 15 14"><path d="M0.500 0.500h5v5h-5zM8.500 0.500h5v5h-5zM0.500 8.500h5v5h-5zM8.500 8.500h5v5h-5z" fill="none" stroke="#555" stroke-width="1"/></svg>
<svg class="abs" style="left:824px;top:5px" width="15" height="14" viewBox="0 0 15 14"><path d="M7.500 2c-2-1.500-5-1.500-7-.500v10c2-1 5-1 7 .500 2-1.500 5-1.500 7-.500v-10c-2-1-5-1-7 .500zM7.500 2v10.500M2.500 4h3M2.500 6.500h3M2.500 9h3M9.500 4h3M9.500 6.500h3M9.500 9h3" fill="none" stroke="#555" stroke-width="1"/></svg>
<svg class="abs" style="left:862px;top:5px" width="16" height="15" viewBox="0 0 16 15"><path d="M0 1.500h16M1.500 1.500v7h13v-7M8 8.500v3M5 14.500l3-3 3 3M5 4.500h6" fill="none" stroke="#555" stroke-width="1.200"/></svg>
<div class="abs" style="left:896px;top:11px;width:7px;height:2px;background:#555"></div>
<div class="abs" style="left:905px;top:12px;width:103px;height:1px;background:#9a9a9a"></div>
<div class="abs" style="left:955px;top:8px;width:1px;height:9px;background:#9a9a9a"></div>
<div class="abs" style="left:939px;top:5px;width:4px;height:14px;background:#555"></div>
<div class="abs" style="left:1008px;top:11px;width:8px;height:2px;background:#555"></div><div class="abs" style="left:1011px;top:8px;width:2px;height:8px;background:#555"></div>
<span class="s" style="left:1025px">77%</span>
<svg class="abs" style="left:1063px;top:5px" width="16" height="15" viewBox="0 0 16 15"><path d="M0.500 0.500h15v14h-15z" fill="none" stroke="#555" stroke-width="1"/><path d="M8 2.500v10M3 7.500h10M6.500 4l1.500-1.500 1.500 1.500M6.500 11l1.500 1.500 1.500-1.500M4.500 6l-1.500 1.500 1.500 1.500M11.500 6l1.500 1.500-1.500 1.500" fill="none" stroke="#555" stroke-width=".9"/></svg>
</div>
</body>
</html>
